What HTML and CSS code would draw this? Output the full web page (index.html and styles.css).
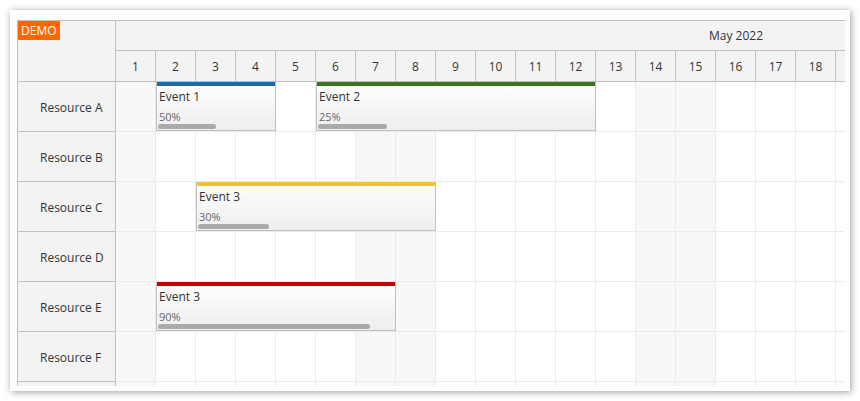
FILE: index.html
```html
<!DOCTYPE html>
<html>
<head>
<meta charset="utf-8">
<link rel="stylesheet" href="styles.css">
</head>
<body>
<div class="panel">
  <div class="scheduler">
    <div class="rowheaders">
      <div class="corner"><span class="demo">DEMO</span></div>
      <div class="rh">Resource A</div>
      <div class="rh">Resource B</div>
      <div class="rh">Resource C</div>
      <div class="rh">Resource D</div>
      <div class="rh">Resource E</div>
      <div class="rh">Resource F</div>
      <div class="rh"></div>
    </div>
    <div class="timeline">
      <div class="month">May 2022</div>
      <div class="days">
        <div class="day">1</div><div class="day">2</div><div class="day">3</div><div class="day">4</div><div class="day">5</div><div class="day">6</div><div class="day">7</div><div class="day">8</div><div class="day">9</div><div class="day">10</div><div class="day">11</div><div class="day">12</div><div class="day">13</div><div class="day">14</div><div class="day">15</div><div class="day">16</div><div class="day">17</div><div class="day">18</div><div class="day"></div>
      </div>
      <div class="grid">
        <div class="row">
          <div class="cell we"></div><div class="cell"></div><div class="cell"></div><div class="cell"></div><div class="cell"></div><div class="cell"></div><div class="cell we"></div><div class="cell we"></div><div class="cell"></div><div class="cell"></div><div class="cell"></div><div class="cell"></div><div class="cell"></div><div class="cell we"></div><div class="cell we"></div><div class="cell"></div><div class="cell"></div><div class="cell"></div><div class="cell"></div>
          <div class="event ev-a">
            <div class="bar blue"></div>
            <div class="etext">Event 1</div>
            <div class="pct">50%</div>
            <div class="track"><div class="fill" style="width:50%"></div></div>
          </div>
          <div class="event ev-b">
            <div class="bar green"></div>
            <div class="etext">Event 2</div>
            <div class="pct">25%</div>
            <div class="track"><div class="fill" style="width:25%"></div></div>
          </div>
        </div>
        <div class="row">
          <div class="cell we"></div><div class="cell"></div><div class="cell"></div><div class="cell"></div><div class="cell"></div><div class="cell"></div><div class="cell we"></div><div class="cell we"></div><div class="cell"></div><div class="cell"></div><div class="cell"></div><div class="cell"></div><div class="cell"></div><div class="cell we"></div><div class="cell we"></div><div class="cell"></div><div class="cell"></div><div class="cell"></div><div class="cell"></div>
        </div>
        <div class="row">
          <div class="cell we"></div><div class="cell"></div><div class="cell"></div><div class="cell"></div><div class="cell"></div><div class="cell"></div><div class="cell we"></div><div class="cell we"></div><div class="cell"></div><div class="cell"></div><div class="cell"></div><div class="cell"></div><div class="cell"></div><div class="cell we"></div><div class="cell we"></div><div class="cell"></div><div class="cell"></div><div class="cell"></div><div class="cell"></div>
          <div class="event ev-c">
            <div class="bar yellow"></div>
            <div class="etext">Event 3</div>
            <div class="pct">30%</div>
            <div class="track"><div class="fill" style="width:30%"></div></div>
          </div>
        </div>
        <div class="row">
          <div class="cell we"></div><div class="cell"></div><div class="cell"></div><div class="cell"></div><div class="cell"></div><div class="cell"></div><div class="cell we"></div><div class="cell we"></div><div class="cell"></div><div class="cell"></div><div class="cell"></div><div class="cell"></div><div class="cell"></div><div class="cell we"></div><div class="cell we"></div><div class="cell"></div><div class="cell"></div><div class="cell"></div><div class="cell"></div>
        </div>
        <div class="row">
          <div class="cell we"></div><div class="cell"></div><div class="cell"></div><div class="cell"></div><div class="cell"></div><div class="cell"></div><div class="cell we"></div><div class="cell we"></div><div class="cell"></div><div class="cell"></div><div class="cell"></div><div class="cell"></div><div class="cell"></div><div class="cell we"></div><div class="cell we"></div><div class="cell"></div><div class="cell"></div><div class="cell"></div><div class="cell"></div>
          <div class="event ev-e">
            <div class="bar red"></div>
            <div class="etext">Event 3</div>
            <div class="pct">90%</div>
            <div class="track"><div class="fill" style="width:90%"></div></div>
          </div>
        </div>
        <div class="row">
          <div class="cell we"></div><div class="cell"></div><div class="cell"></div><div class="cell"></div><div class="cell"></div><div class="cell"></div><div class="cell we"></div><div class="cell we"></div><div class="cell"></div><div class="cell"></div><div class="cell"></div><div class="cell"></div><div class="cell"></div><div class="cell we"></div><div class="cell we"></div><div class="cell"></div><div class="cell"></div><div class="cell"></div><div class="cell"></div>
        </div>
        <div class="row">
          <div class="cell we"></div><div class="cell"></div><div class="cell"></div><div class="cell"></div><div class="cell"></div><div class="cell"></div><div class="cell we"></div><div class="cell we"></div><div class="cell"></div><div class="cell"></div><div class="cell"></div><div class="cell"></div><div class="cell"></div><div class="cell we"></div><div class="cell we"></div><div class="cell"></div><div class="cell"></div><div class="cell"></div><div class="cell"></div>
        </div>
      </div>
    </div>
  </div>
</div>
</body>
</html>
```

FILE: styles.css
```css
html, body {
  margin: 0;
  padding: 0;
  background: #ffffff;
}

body {
  font-family: "Open Sans", "DejaVu Sans", sans-serif;
  font-size: 12px;
  color: #333333;
}

.panel {
  margin: 10px;
  width: 840px;
  height: 381px;
  box-sizing: border-box;
  padding: 10px 0 0 7px;
  background: #ffffff;
  box-shadow: 1px 1px 7px rgba(0, 0, 0, 0.4);
  overflow: hidden;
}

.scheduler {
  width: 828px;
  height: 366px;
  box-sizing: border-box;
  border-left: 1px solid #c0c0c0;
  border-top: 1px solid #c0c0c0;
  display: flex;
  overflow: hidden;
}

.rowheaders {
  width: 98px;
  flex: none;
  display: flex;
  flex-direction: column;
}

.corner {
  position: relative;
  height: 61px;
  flex: none;
  box-sizing: border-box;
  background: #f3f3f3;
  border-right: 1px solid #c0c0c0;
  border-bottom: 1px solid #c0c0c0;
}

.demo {
  position: absolute;
  left: 0;
  top: 0;
  background: #ff6600;
  color: #ffffff;
  line-height: 19px;
  height: 19px;
  padding: 0 3px;
  font-size: 12px;
}

.rh {
  height: 50px;
  flex: none;
  box-sizing: border-box;
  background: #f3f3f3;
  border-right: 1px solid #c0c0c0;
  border-bottom: 1px solid #c0c0c0;
  padding: 2px 0 0 22px;
  line-height: 47px;
  white-space: nowrap;
}

.timeline {
  width: 730px;
  flex: none;
  overflow: hidden;
}

.month {
  width: 1240px;
  height: 30px;
  box-sizing: border-box;
  background: #f3f3f3;
  border-bottom: 1px solid #c0c0c0;
  text-align: center;
  padding-top: 1px;
  line-height: 28px;
}

.days {
  display: flex;
  width: 1240px;
  height: 31px;
  box-sizing: border-box;
  background: #f3f3f3;
  border-bottom: 1px solid #c0c0c0;
}

.day {
  width: 40px;
  flex: none;
  box-sizing: border-box;
  border-right: 1px solid #c0c0c0;
  text-align: center;
  padding-top: 1px;
  line-height: 29px;
}

.grid {
  width: 1240px;
}

.row {
  position: relative;
  display: flex;
  height: 50px;
  box-sizing: border-box;
  border-bottom: 1px solid #ebebeb;
}

.cell {
  width: 40px;
  flex: none;
  box-sizing: border-box;
  border-right: 1px solid #ebebeb;
  background: #ffffff;
}

.cell.we {
  background: #f8f8f8;
}

.event {
  position: absolute;
  top: 0;
  height: 49px;
  box-sizing: border-box;
  border: 1px solid #c0c0c0;
  border-top: none;
  background: linear-gradient(#ffffff, #eeeeee);
  overflow: hidden;
}

.ev-a { left: 40px; width: 120px; }
.ev-b { left: 200px; width: 280px; }
.ev-c { left: 80px; width: 240px; }
.ev-e { left: 40px; width: 240px; }

.bar {
  height: 4px;
  margin: 0 -1px;
}

.blue { background: #1c68aa; }
.green { background: #38761d; }
.yellow { background: #f1c232; }
.red { background: #cc0000; }

.etext {
  padding: 3px 0 0 2px;
  line-height: 16px;
  font-size: 12px;
  color: #333333;
  white-space: nowrap;
}

.pct {
  margin-top: 5px;
  padding-left: 2px;
  line-height: 14px;
  font-size: 11px;
  color: #666666;
}

.track {
  margin: 0 1px;
  height: 5px;
}

.fill {
  height: 5px;
  border-radius: 3px;
  background: #aaaaaa;
}
```
